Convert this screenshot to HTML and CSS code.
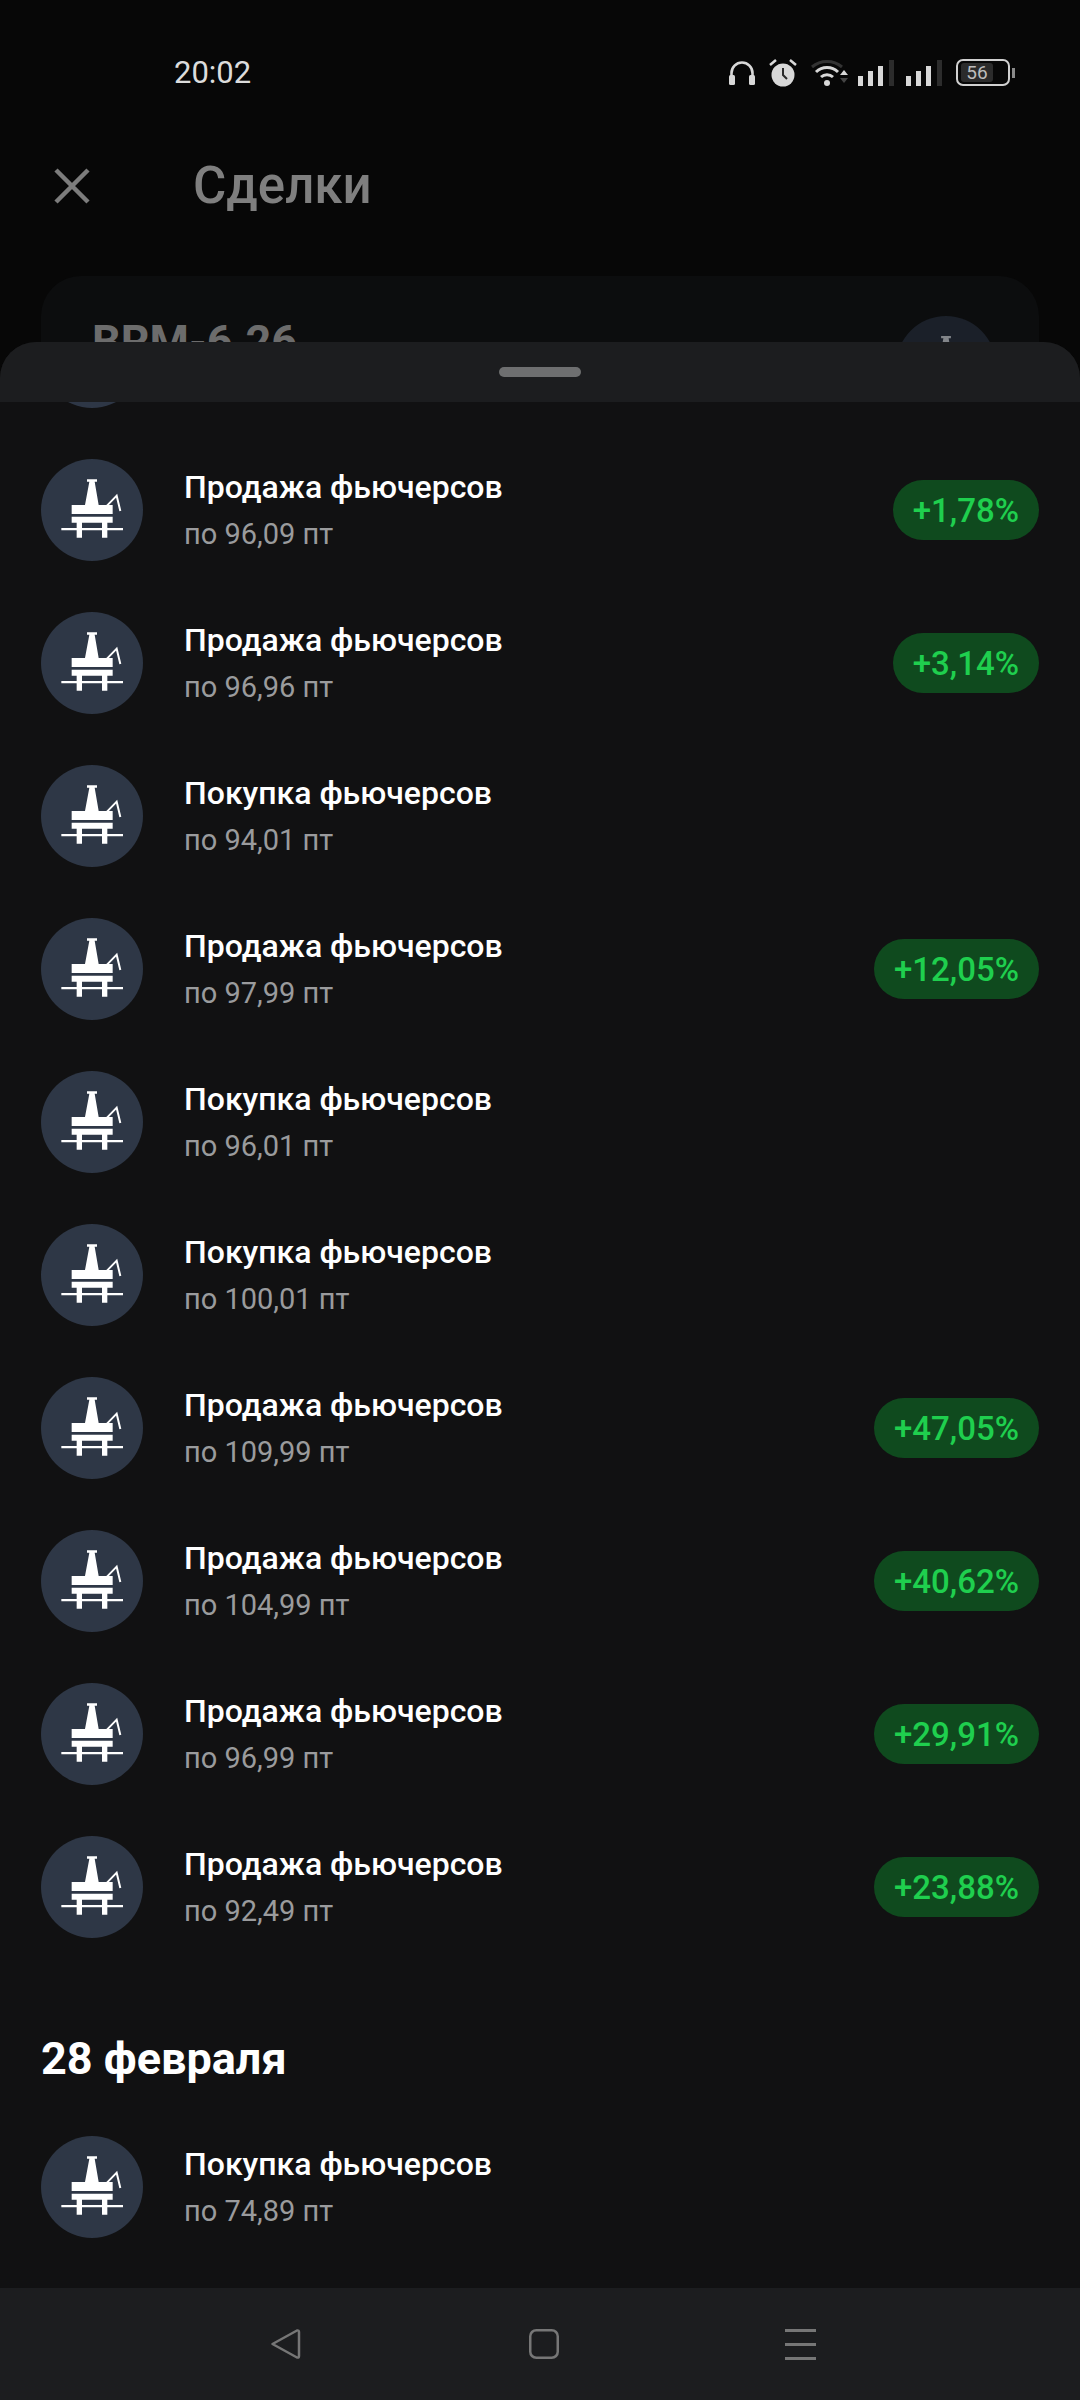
FILE: index.html
```html
<!DOCTYPE html>
<html lang="ru">
<head>
<meta charset="utf-8">
<title>Сделки</title>
<link rel="stylesheet" href="styles.css">
</head>
<body>
<svg class="defs" width="0" height="0" aria-hidden="true">
  <symbol id="rig" viewBox="0 0 306 306">
    <path d="M138 61h30v7h-7l12 70h42v27H92v-27h40l13-70h-7z" fill="#fff"/>
    <path d="M92 173h123v18h-16v16h47v7h-47v22h-16v-22h-60v22h-16v-22H61v-7h46v-16H92zM123 191v16h60v-16z" fill="#fff" fill-rule="evenodd"/>
    <path d="M198 140l29-30 11 46" fill="none" stroke="#fff" stroke-width="6"/>
  </symbol>
</svg>

<header class="status">
  <span class="time">20:02</span>
  <div class="status-icons">
    <svg class="ic-phones" viewBox="0 0 26 24"><path d="M2.500 22V12a10.500 10.500 0 0 1 21 0v10" fill="none" stroke="#d8d8d8" stroke-width="2.600"/><rect x="0" y="14" width="6" height="10" rx="1.500" fill="#d8d8d8"/><rect x="20" y="14" width="6" height="10" rx="1.500" fill="#d8d8d8"/></svg>
    <svg class="ic-alarm" viewBox="0 0 28 28"><circle cx="14" cy="16" r="11.500" fill="#d8d8d8"/><path d="M14 9v7l4 4" fill="none" stroke="#2a2a2a" stroke-width="2"/><path d="M1 6l6-5M27 6l-6-5" stroke="#d8d8d8" stroke-width="2.500"/></svg>
    <svg class="ic-wifi" viewBox="0 0 38 30"><path d="M1 9a23 23 0 0 1 30 0" fill="none" stroke="#333" stroke-width="3"/><path d="M5 14a16 16 0 0 1 22 0M10 19a9 9 0 0 1 12 0" fill="none" stroke="#d8d8d8" stroke-width="3"/><circle cx="16" cy="25" r="3" fill="#d8d8d8"/><path d="M29 17l4-5 4 5z" fill="#d8d8d8"/><path d="M29 20l4 5 4-5z" fill="#444"/></svg>
    <svg class="ic-signal" viewBox="0 0 36 26"><rect x="0" y="16" width="5" height="10" fill="#d8d8d8"/><rect x="10" y="11" width="5" height="15" fill="#d8d8d8"/><rect x="20" y="6" width="5" height="20" fill="#d8d8d8"/><rect x="31" y="0" width="5" height="26" fill="#2c2c2c"/></svg>
    <svg class="ic-signal" viewBox="0 0 36 26"><rect x="0" y="16" width="5" height="10" fill="#d8d8d8"/><rect x="10" y="11" width="5" height="15" fill="#d8d8d8"/><rect x="20" y="6" width="5" height="20" fill="#d8d8d8"/><rect x="31" y="0" width="5" height="26" fill="#2c2c2c"/></svg>
    <div class="battery"><div class="battery-body"><span class="battery-level">56</span></div><i class="battery-cap"></i></div>
  </div>
</header>

<div class="toolbar">
  <svg class="close" viewBox="0 0 36 36"><path d="M2 2l32 32M34 2L2 34" stroke="#7c7c7c" stroke-width="4.500" fill="none"/></svg>
  <h1 class="page-title">Сделки</h1>
</div>

<section class="instrument">
  <span class="instrument-name">BRM-6.26</span>
  <div class="instrument-avatar"><svg class="rig-dim"><use href="#rig"/></svg></div>
</section>

<section class="sheet">
  <div class="sheet-head"><div class="handle"></div></div>
  <div class="list">
    <div class="row row-clipped"><div class="avatar"></div></div>

    <div class="row"><div class="avatar"><svg class="rig"><use href="#rig"/></svg></div><div class="info"><div class="name">Продажа фьючерсов</div><div class="price">по 96,09 пт</div></div><span class="pill">+1,78%</span></div>
    <div class="row"><div class="avatar"><svg class="rig"><use href="#rig"/></svg></div><div class="info"><div class="name">Продажа фьючерсов</div><div class="price">по 96,96 пт</div></div><span class="pill">+3,14%</span></div>
    <div class="row"><div class="avatar"><svg class="rig"><use href="#rig"/></svg></div><div class="info"><div class="name">Покупка фьючерсов</div><div class="price">по 94,01 пт</div></div></div>
    <div class="row"><div class="avatar"><svg class="rig"><use href="#rig"/></svg></div><div class="info"><div class="name">Продажа фьючерсов</div><div class="price">по 97,99 пт</div></div><span class="pill">+12,05%</span></div>
    <div class="row"><div class="avatar"><svg class="rig"><use href="#rig"/></svg></div><div class="info"><div class="name">Покупка фьючерсов</div><div class="price">по 96,01 пт</div></div></div>
    <div class="row"><div class="avatar"><svg class="rig"><use href="#rig"/></svg></div><div class="info"><div class="name">Покупка фьючерсов</div><div class="price">по 100,01 пт</div></div></div>
    <div class="row"><div class="avatar"><svg class="rig"><use href="#rig"/></svg></div><div class="info"><div class="name">Продажа фьючерсов</div><div class="price">по 109,99 пт</div></div><span class="pill">+47,05%</span></div>
    <div class="row"><div class="avatar"><svg class="rig"><use href="#rig"/></svg></div><div class="info"><div class="name">Продажа фьючерсов</div><div class="price">по 104,99 пт</div></div><span class="pill">+40,62%</span></div>
    <div class="row"><div class="avatar"><svg class="rig"><use href="#rig"/></svg></div><div class="info"><div class="name">Продажа фьючерсов</div><div class="price">по 96,99 пт</div></div><span class="pill">+29,91%</span></div>
    <div class="row"><div class="avatar"><svg class="rig"><use href="#rig"/></svg></div><div class="info"><div class="name">Продажа фьючерсов</div><div class="price">по 92,49 пт</div></div><span class="pill">+23,88%</span></div>

    <h2 class="date">28 февраля</h2>

    <div class="row"><div class="avatar"><svg class="rig"><use href="#rig"/></svg></div><div class="info"><div class="name">Покупка фьючерсов</div><div class="price">по 74,89 пт</div></div></div>
  </div>
</section>

<nav class="navbar">
  <svg class="nav-back" viewBox="0 0 30 30"><path d="M1.500 15L26 1.500q2-.5 2 1.500v24q0 2-2 1.500z" fill="none" stroke="#767676" stroke-width="2.500" stroke-linejoin="round"/></svg>
  <svg class="nav-home" viewBox="0 0 30 30"><rect x="1.250" y="1.250" width="27.500" height="27.500" rx="6" fill="none" stroke="#767676" stroke-width="2.500"/></svg>
  <svg class="nav-menu" viewBox="0 0 31 31"><path d="M0 1.500h31M0 15.500h31M0 29.500h31" stroke="#767676" stroke-width="3"/></svg>
</nav>
</body>
</html>
```

FILE: styles.css
```css
* { box-sizing: border-box; }
html, body { margin: 0; padding: 0; }
body {
  position: relative;
  width: 1080px;
  height: 2400px;
  overflow: hidden;
  background: #070707;
  font-family: Roboto, "Noto Sans", sans-serif;
  display: flex;
  flex-direction: column;
}
.defs { position: absolute; }

.status {
  flex: none;
  height: 145px;
  padding: 0 65px 0 174px;
  display: flex;
  justify-content: space-between;
  align-items: center;
}
.time { font-size: 31px; color: #dcdcdc; }
.status-icons { display: flex; align-items: center; gap: 12px; }
.ic-phones { width: 26px; height: 24px; margin-right: 2px; }
.ic-alarm { width: 28px; height: 28px; margin-right: 2px; }
.ic-wifi { width: 38px; height: 30px; margin-right: -3px; }
.ic-signal { width: 36px; height: 26px; }
.battery { display: flex; align-items: center; gap: 2px; margin-left: 2px; }
.battery-body {
  width: 54px;
  height: 27px;
  border: 2px solid #d0d0d0;
  border-radius: 7px;
  padding: 2px 15px 2px 3px;
  display: flex;
}
.battery-level {
  flex: 1;
  background: #2b2b2b;
  border-radius: 3px;
  color: #bdbdbd;
  font-size: 19px;
  line-height: 19px;
  text-align: center;
}
.battery-cap { width: 3px; height: 10px; background: #8a8a8a; }

.toolbar {
  flex: none;
  height: 81px;
  padding-left: 54px;
  display: flex;
  align-items: center;
  gap: 103px;
}
.close { width: 36px; height: 36px; }
.page-title { margin: 0; font-size: 51px; font-weight: 500; color: #7f7f7f; }

.instrument {
  flex: none;
  margin: 50px 41px 0;
  height: 300px;
  background: #0c0d0e;
  border-radius: 40px;
  padding: 40px 43px 0 51px;
  display: flex;
  justify-content: space-between;
  align-items: flex-start;
}
.instrument-name { font-size: 45px; font-weight: 700; color: #6c6c6c; line-height: 52px; }
.instrument-avatar {
  width: 100px;
  height: 100px;
  border-radius: 50%;
  background: #1b2029;
}
.rig-dim { display: block; width: 100px; height: 100px; opacity: .45; }

.sheet {
  position: absolute;
  top: 342px;
  left: 0;
  right: 0;
  bottom: 112px;
  background: #111112;
  border-radius: 36px 36px 0 0;
  overflow: hidden;
  display: flex;
  flex-direction: column;
}
.sheet-head {
  flex: none;
  height: 60px;
  background: #1c1d1f;
  padding-top: 25px;
  display: flex;
  justify-content: center;
}
.handle { width: 82px; height: 10px; border-radius: 5px; background: #6e6f70; }

.list { flex: 1; overflow: hidden; }
.row {
  height: 153px;
  padding: 0 41px;
  display: flex;
  align-items: center;
  gap: 41px;
}
.row-clipped { margin-top: -122px; }
.avatar {
  flex: none;
  width: 102px;
  height: 102px;
  border-radius: 50%;
  background: #2e3746;
}
.rig { display: block; width: 102px; height: 102px; }
.info { flex: 1; padding-top: 1px; }
.name { font-size: 32px; font-weight: 500; line-height: 46px; color: #fff; margin-bottom: 1px; }
.price { font-size: 29px; line-height: 46px; color: #9a9b9d; }
.pill {
  height: 60px;
  padding: 1px 20px 0;
  border-radius: 30px;
  background: #0f4a1e;
  color: #1fcf4e;
  font-size: 33px;
  font-weight: 500;
  line-height: 60px;
}
.date {
  margin: 0;
  height: 147px;
  padding: 70px 41px 0;
  font-size: 45px;
  font-weight: 700;
  line-height: 52px;
  color: #fff;
}

.navbar {
  flex: none;
  margin-top: auto;
  position: relative;
  height: 112px;
  background: #1c1d1f;
  display: flex;
  align-items: center;
  padding: 0 0 0 271px;
}
.nav-back { width: 30px; height: 30px; }
.nav-home { width: 30px; height: 30px; margin-left: 228px; }
.nav-menu { width: 31px; height: 31px; margin-left: 226px; }
```
